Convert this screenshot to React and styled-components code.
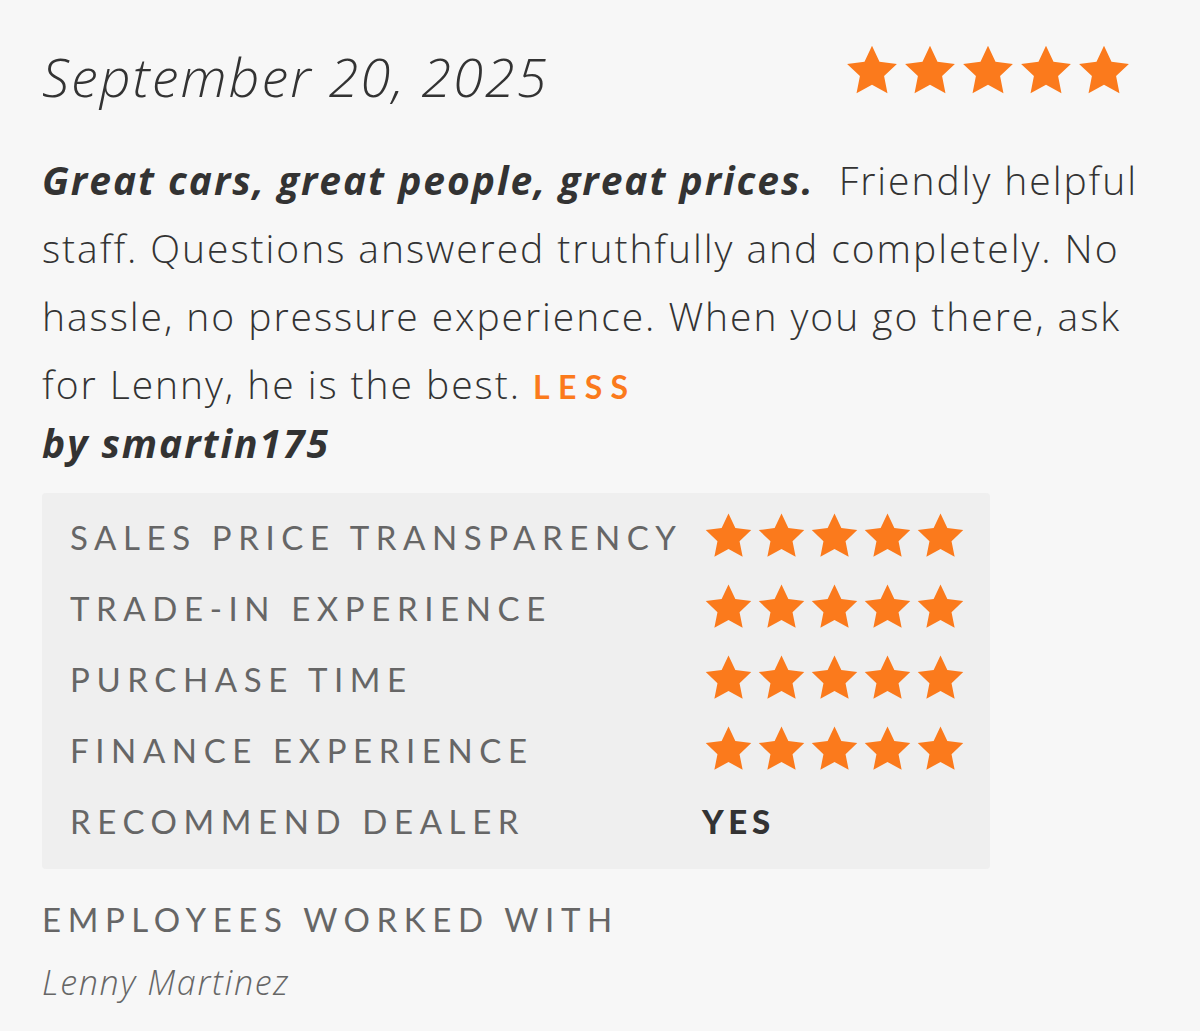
import React from 'react'
import styled, { createGlobalStyle } from 'styled-components'

const GlobalStyle = createGlobalStyle`
  html, body {
    margin: 0;
    padding: 0;
    background: #f7f7f7;
  }
  body {
    font-family: "Open Sans", Lato, sans-serif;
    color: #333;
  }
`

const ORANGE = '#fb7a1c'

const review = {
  date: 'September 20, 2025',
  title: 'Great cars, great people, great prices.',
  body: 'Friendly helpful staff. Questions answered truthfully and completely. No hassle, no pressure experience. When you go there, ask for Lenny, he is the best.',
  author: 'smartin175',
  ratings: [
    { label: 'Sales Price Transparency', stars: 5 },
    { label: 'Trade-In Experience', stars: 5 },
    { label: 'Purchase Time', stars: 5 },
    { label: 'Finance Experience', stars: 5 },
    { label: 'Recommend Dealer', text: 'Yes' },
  ],
  employees: ['Lenny Martinez'],
}

const Star = ({ size }) => (
  <svg width={size} height={size} viewBox="0 0 24 24">
    <path
      fill={ORANGE}
      d="M12 1.6l3.1 6.6 7.2.9-5.3 5 1.4 7.1L12 17.7l-6.4 3.5L7 14.1l-5.3-5 7.2-.9z"
    />
  </svg>
)

const Stars = ({ count, size, gap }) => (
  <StarRow $gap={gap}>
    {Array.from({ length: count }).map((_, i) => (
      <Star key={i} size={size} />
    ))}
  </StarRow>
)

const App = () => {
  return (
    <>
      <GlobalStyle />
      <Page>
        <Header>
          <DateText>{review.date}</DateText>
          <HeaderStars>
            <Stars count={5} size={58} gap={-1} />
          </HeaderStars>
        </Header>

        <Body>
          <Title>{review.title}</Title>
          {'  '}{review.body} <Less>Less</Less>
        </Body>
        <Author>by {review.author}</Author>

        <RatingBox>
          {review.ratings.map((r) => (
            <RatingRow key={r.label}>
              <Label>{r.label}</Label>
              {r.text ? <Answer>{r.text}</Answer> : <Stars count={r.stars} size={53} gap={-3} />}
            </RatingRow>
          ))}
        </RatingBox>

        <Employees>
          <Label>Employees Worked With</Label>
          {review.employees.map((e) => (
            <Employee key={e}>{e}</Employee>
          ))}
        </Employees>
      </Page>
    </>
  )
}

const Page = styled.main`
  padding: 36px 48px 20px 42px;
  max-width: 1110px;
`

const Header = styled.div`
  display: flex;
  justify-content: space-between;
  align-items: center;
`

const HeaderStars = styled.div`
  margin: -11px 19px 0 0;
`

const DateText = styled.h2`
  margin: 0;
  font-size: 54px;
  font-weight: 300;
  font-style: italic;
  letter-spacing: 2px;
  color: #333;
  line-height: 80px;
`

const StarRow = styled.div`
  display: flex;
  align-items: center;
  gap: ${(p) => p.$gap}px;
`

const Body = styled.p`
  margin: 30px 0 0;
  font-size: 39px;
  font-weight: 300;
  letter-spacing: 0.05em;
  line-height: 68px;
  color: #333;
  white-space: pre-wrap;
`

const Title = styled.strong`
  font-style: italic;
  font-weight: 700;
`

const Less = styled.span`
  font-family: Lato, sans-serif;
  color: ${ORANGE};
  font-size: 32px;
  font-weight: 700;
  letter-spacing: 0.26em;
  text-transform: uppercase;
`

const Author = styled.div`
  font-size: 39px;
  font-weight: 700;
  font-style: italic;
  letter-spacing: 0.05em;
  line-height: 56px;
  margin-top: -6px;
`

const RatingBox = styled.section`
  margin-top: 22px;
  width: 948px;
  box-sizing: border-box;
  padding: 8px 28px 13px;
  background: #efefef;
  border-radius: 4px;
`

const RatingRow = styled.div`
  display: grid;
  grid-template-columns: 632px auto;
  align-items: center;
  height: 71px;
`

const Label = styled.div`
  font-family: Lato, sans-serif;
  font-size: 33px;
  font-weight: 400;
  letter-spacing: 0.2em;
  text-transform: uppercase;
  color: #666;
  white-space: nowrap;
`

const Answer = styled.div`
  font-family: Lato, sans-serif;
  font-size: 33px;
  font-weight: 900;
  letter-spacing: 0.14em;
  text-transform: uppercase;
  color: #333;
`

const Employees = styled.section`
  margin-top: 30px;
  display: flex;
  flex-direction: column;
  gap: 20px;
`

const Employee = styled.div`
  font-size: 34px;
  font-weight: 300;
  font-style: italic;
  letter-spacing: 0.05em;
  color: #666;
`

export default App
